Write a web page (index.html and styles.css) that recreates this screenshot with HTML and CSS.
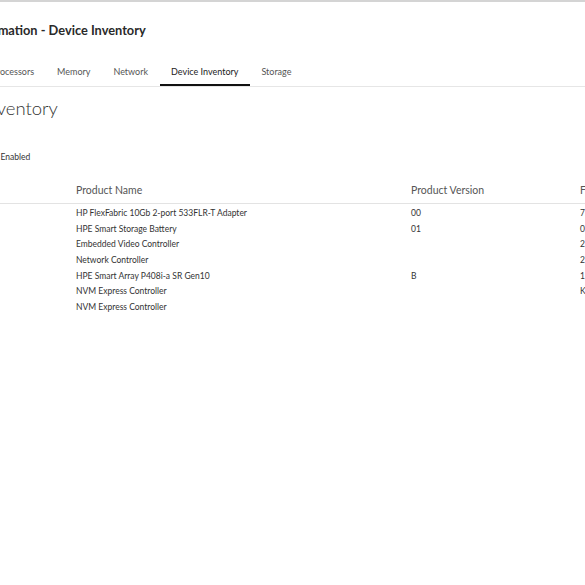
FILE: index.html
```html
<!DOCTYPE html>
<html>
<head>
<meta charset="utf-8">
<link rel="stylesheet" href="styles.css">
</head>
<body>
<div class="page">
  <header class="topbar">
    <h1 class="title">System Information - Device Inventory</h1>
    <nav class="tabs">
      <span class="tab">Processors</span>
      <span class="tab">Memory</span>
      <span class="tab">Network</span>
      <span class="tab active">Device Inventory</span>
      <span class="tab">Storage</span>
    </nav>
  </header>
  <h2 class="heading">Device Inventory</h2>
  <div class="status">Status: Enabled</div>
  <table class="grid">
    <thead>
      <tr><th class="c-loc"></th><th class="c-name">Product Name</th><th class="c-ver">Product Version</th><th class="c-fw">Firmware Version</th></tr>
    </thead>
    <tbody>
      <tr><td></td><td>HP FlexFabric 10Gb 2-port 533FLR-T Adapter</td><td>00</td><td>7.15.97</td></tr>
      <tr><td></td><td>HPE Smart Storage Battery</td><td>01</td><td>0.70</td></tr>
      <tr><td></td><td>Embedded Video Controller</td><td></td><td>2.5</td></tr>
      <tr><td></td><td>Network Controller</td><td></td><td>2.1</td></tr>
      <tr><td></td><td>HPE Smart Array P408i-a SR Gen10</td><td>B</td><td>1.98</td></tr>
      <tr><td></td><td>NVM Express Controller</td><td></td><td>KPV8</td></tr>
      <tr><td></td><td>NVM Express Controller</td><td></td><td></td></tr>
    </tbody>
  </table>
</div>
</body>
</html>
```
FILE: styles.css
```css
html, body {
  margin: 0;
  padding: 0;
  background: #fff;
  overflow: hidden;
  width: 585px;
  height: 585px;
}
body {
  font-family: Lato, "Open Sans", sans-serif;
  color: #333;
  border-top: 2px solid #d4d4d4;
  box-sizing: border-box;
}
.page {
  width: 585px;
  overflow: hidden;
}
.topbar {
  border-bottom: 1px solid #e6e6e6;
}
.title {
  margin: 19px 0 0 -74px;
  font-size: 12.8px;
  font-weight: 700;
  color: #2a2a2a;
  white-space: nowrap;
  line-height: 18px;
}
.tabs {
  display: flex;
  margin: 23px 0 0 -20px;
  white-space: nowrap;
}
.tab {
  font-size: 9px;
  color: #555;
  padding: 4px 11.5px 7px;
  border-bottom: 2px solid transparent;
}
.tab.active {
  color: #222;
  border-bottom-color: #111;
}
.heading {
  margin: 8px 0 0 -78px;
  font-size: 18.5px;
  font-weight: 300;
  color: #333;
  white-space: nowrap;
  line-height: 26px;
}
.status {
  margin: 31px 0 0 -27px;
  font-size: 8.5px;
  color: #333;
  white-space: nowrap;
}
.grid {
  border-collapse: collapse;
  margin: 22px 0 0 -40px;
  white-space: nowrap;
  table-layout: fixed;
  width: 750px;
}
.grid th {
  text-align: left;
  font-weight: 400;
  font-size: 10.5px;
  color: #555;
  padding: 0 0 7px;
  border-bottom: 1px solid #e3e3e3;
}
.grid td {
  font-size: 8.5px;
  color: #333;
  padding: 0;
  height: 15.7px;
}
.grid tbody tr:first-child td { padding-top: 1px; }
.grid .c-loc { width: 116px; }
.grid .c-name { width: 335px; }
.grid .c-ver { width: 169px; }
.grid .c-fw { width: 130px; }
```
